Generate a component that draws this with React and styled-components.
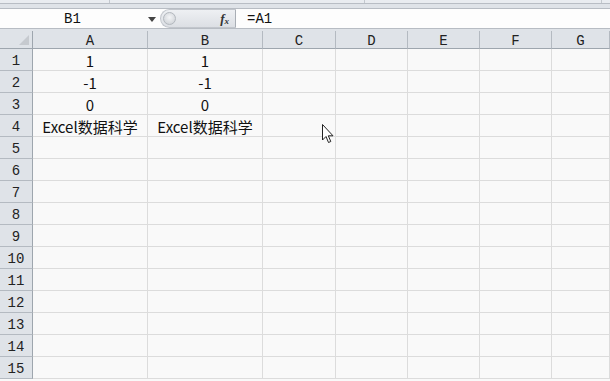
import React from 'react';
import styled, { createGlobalStyle } from 'styled-components';

const GlobalStyle = createGlobalStyle`
    html, body { margin: 0; padding: 0; background: #f9f9f9; overflow: hidden; }
    * { box-sizing: border-box; }
`;

const columns = [
    { name: 'A', width: 115 },
    { name: 'B', width: 115 },
    { name: 'C', width: 73 },
    { name: 'D', width: 72 },
    { name: 'E', width: 72 },
    { name: 'F', width: 72 },
    { name: 'G', width: 58 },
];

const data = {
    1: ['1', '1'],
    2: ['-1', '-1'],
    3: ['0', '0'],
    4: ['Excel数据科学', 'Excel数据科学'],
};

const rows = Array.from({ length: 15 }, (_, i) => i + 1);

export default () => {
    return (
        <Page>
            <GlobalStyle />
            <Ribbon>
                <RibbonPart w={110} />
                <RibbonPart w={255} />
                <RibbonPart w={237} />
                <RibbonPart w={8} last />
            </Ribbon>
            <Band />
            <FormulaBar>
                <NameBox>B1</NameBox>
                <DropArrow>
                    <svg width="8" height="5" viewBox="0 0 8 5"><path d="M0 0h8L4 5z" fill="#444" /></svg>
                </DropArrow>
                <FxPill>
                    <Knob />
                    <Fx>f<sub>x</sub></Fx>
                </FxPill>
                <FormulaInput>=A1</FormulaInput>
            </FormulaBar>
            <Gap />
            <Sheet>
                <Corner>
                    <svg width="10" height="10" viewBox="0 0 10 10"><path d="M10 0v10H0z" fill="#c6cacf" /></svg>
                </Corner>
                {columns.map(c => <ColHead key={c.name} w={c.width}>{c.name}</ColHead>)}
                {rows.map(r => (
                    <React.Fragment key={r}>
                        <RowHead>{r}</RowHead>
                        {columns.map((c, i) => (
                            <Cell key={c.name} w={c.width}>{data[r] ? data[r][i] : ''}</Cell>
                        ))}
                    </React.Fragment>
                ))}
            </Sheet>
            <Cursor width="12" height="20" viewBox="0 0 12 20">
                <path d="M0.5 0.5 L0.5 16 L4 12.5 L6.5 18.5 L8.8 17.5 L6.3 11.8 L11 11.8 Z" fill="#fff" stroke="#222" strokeWidth="1" strokeLinejoin="miter" />
            </Cursor>
        </Page>
    );
};

const Page = styled.div`
    width: 610px;
    height: 381px;
    position: relative;
    overflow: hidden;
    background: #f9f9f9;
`;

const Ribbon = styled.div`
    display: flex;
    height: 4px;
    background: #e9ecf0;
    border-bottom: 1px solid #b8bdc4;
`;

const RibbonPart = styled.div`
    width: ${p => p.w}px;
    height: 100%;
    border-right: ${p => p.last ? 'none' : '1px solid #c3c8ce'};
`;

const Band = styled.div`
    height: 4px;
    background: #dfe3e8;
`;

const FormulaBar = styled.div`
    display: flex;
    align-items: center;
    height: 21px;
    background: #fdfdfd;
    border-top: 1px solid #b7bcc3;
    border-bottom: 1px solid #b7bcc3;
    font-family: "Liberation Mono", monospace;
    font-size: 14px;
    color: #111;
`;

const NameBox = styled.div`
    width: 143px;
    text-align: center;
    padding-left: 2px;
`;

const DropArrow = styled.div`
    width: 17px;
    display: flex;
    justify-content: center;
    align-items: center;
    padding-top: 2px;
`;

const FxPill = styled.div`
    position: relative;
    width: 76px;
    height: 19px;
    border-radius: 10px 0 0 10px;
    background: linear-gradient(#eef0f3, #dcdfe4);
    border: 1px solid #c2c6cc;
    border-right: 1px solid #a9aeb5;
    display: flex;
    align-items: center;
    justify-content: flex-end;
    padding-right: 6px;
`;

const Knob = styled.div`
    position: absolute;
    left: 2px;
    top: 2px;
    width: 13px;
    height: 13px;
    border-radius: 50%;
    background: radial-gradient(circle at 50% 40%, #f4f5f7, #c9cdd2);
    border: 1px solid #b3b8be;
`;

const Fx = styled.span`
    font-family: "Liberation Serif", serif;
    font-style: italic;
    font-weight: bold;
    font-size: 13px;
    color: #333;
    sub { font-size: 9px; vertical-align: -1px; }
`;

const FormulaInput = styled.div`
    flex: 1;
    padding-left: 11px;
`;

const Gap = styled.div`
    height: 2px;
    background: #dfe3e8;
`;

const Sheet = styled.div`
    display: grid;
    grid-template-columns: 33px ${columns.map(c => c.width + 'px').join(' ')};
    grid-template-rows: 18px;
    grid-auto-rows: 22px;
`;

const HeadBase = styled.div`
    background: #dfe3e8;
    color: #222;
    font-family: "Liberation Mono", monospace;
    font-size: 14px;
    display: flex;
    align-items: center;
    justify-content: center;
`;

const Corner = styled(HeadBase)`
    border-right: 1px solid #9ea6ae;
    border-bottom: 1px solid #9ea6ae;
    align-items: flex-end;
    justify-content: flex-end;
    padding: 0 3px 3px 0;
`;

const ColHead = styled(HeadBase)`
    border-right: 1px solid #b4bac1;
    border-bottom: 1px solid #9ea6ae;
    padding-top: 2px;
`;

const RowHead = styled(HeadBase)`
    border-right: 1px solid #9ea6ae;
    border-bottom: 1px solid #b4bac1;
    padding-top: 3px;
`;

const Cell = styled.div`
    background: #f9f9f9;
    border-right: 1px solid #dcdcdc;
    border-bottom: 1px solid #dcdcdc;
    font-family: "Noto Sans CJK SC", "Noto Sans", sans-serif;
    font-size: 15px;
    color: #111;
    display: flex;
    align-items: center;
    justify-content: center;
    white-space: nowrap;
    overflow: visible;
    padding-top: 1px;
`;

const Cursor = styled.svg`
    position: absolute;
    left: 322px;
    top: 124px;
`;
